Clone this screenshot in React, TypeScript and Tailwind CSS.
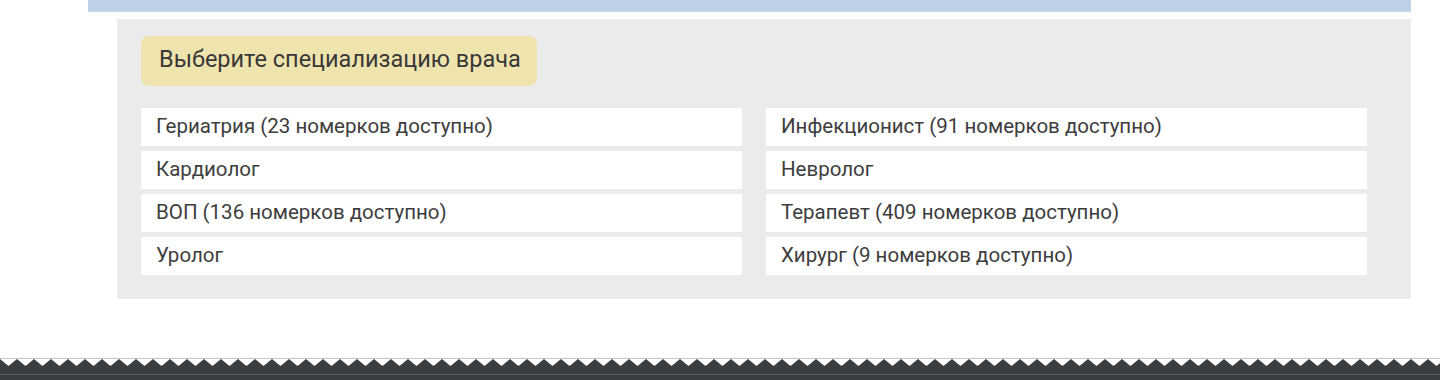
import React from "react";

const left = [
  "Гериатрия (23 номерков доступно)",
  "Кардиолог",
  "ВОП (136 номерков доступно)",
  "Уролог",
];
const right = [
  "Инфекционист (91 номерков доступно)",
  "Невролог",
  "Терапевт (409 номерков доступно)",
  "Хирург (9 номерков доступно)",
];

function Column({ items }: { items: string[] }) {
  return (
    <div className="flex flex-col gap-[5px]">
      {items.map((t) => (
        <div
          key={t}
          className="h-[38px] bg-white pl-[15px] pb-[2px] flex items-center text-[20.5px] text-[#3d3d3d] leading-none"
        >
          {t}
        </div>
      ))}
    </div>
  );
}

export default function App() {
  return (
    <div
      className="w-[1440px] h-[380px] bg-white overflow-hidden flex flex-col"
      style={{ fontFamily: "Roboto, 'Noto Sans', sans-serif" }}
    >
      <div className="ml-[88px] w-[1323px] h-[12px] bg-[#bfd1e6] border-b border-[#c9d8ea]" />
      <div className="ml-[117px] mt-[7px] w-[1294px] h-[280px] bg-[#ebebeb] pt-[17px] pl-[24px] pr-[44px]">
        <div className="w-[396px] h-[50px] rounded-[8px] bg-[#f0e4ae] flex items-center pl-[18px] pb-[2px] text-[23.5px] text-[#383838]">
          Выберите специализацию врача
        </div>
        <div className="mt-[22px] grid grid-cols-2 gap-x-[24px]">
          <Column items={left} />
          <Column items={right} />
        </div>
      </div>
      <div className="mt-auto h-[22px] flex flex-col">
        <div className="h-[1px] bg-[#c4c4c4]" />
        <svg width="1440" height="9" className="block">
          <defs>
            <pattern id="zz" width="17" height="9" patternUnits="userSpaceOnUse">
              <rect width="17" height="9" fill="#3b3e41" />
              <polygon points="0,0 17,0 8.5,7" fill="#ffffff" />
            </pattern>
          </defs>
          <rect width="1440" height="9" fill="url(#zz)" />
        </svg>
        <div className="h-[6px] bg-[#3b3e41]" />
        <div className="h-[1px] bg-[#5c5f62]" />
        <div className="flex-1 bg-[#3b3e41]" />
      </div>
    </div>
  );
}
